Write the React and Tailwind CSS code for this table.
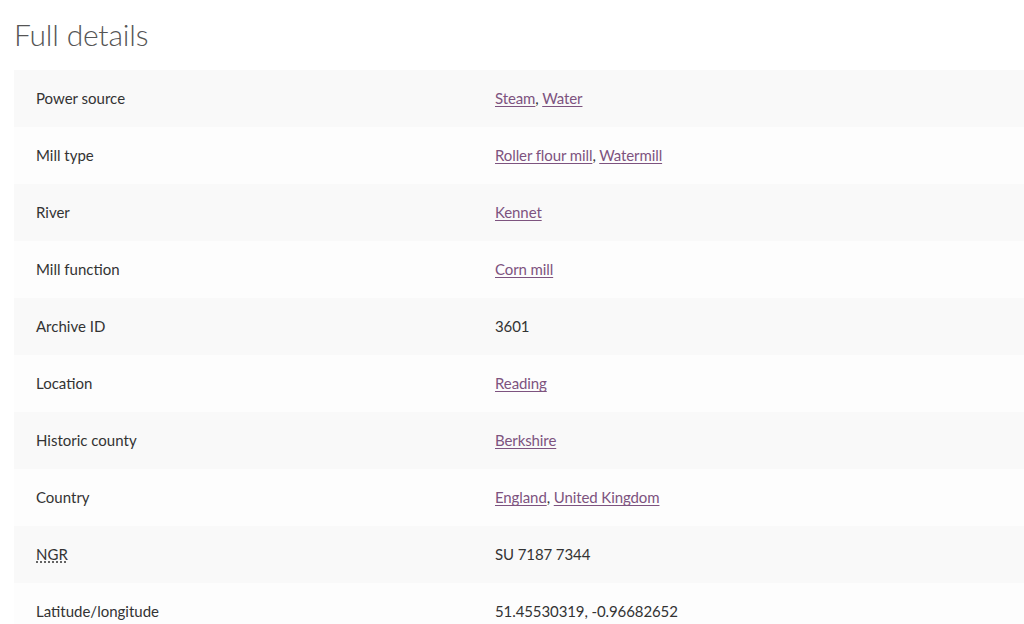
const rows = [
  { label: 'Power source', links: ['Steam', 'Water'] },
  { label: 'Mill type', links: ['Roller flour mill', 'Watermill'] },
  { label: 'River', links: ['Kennet'] },
  { label: 'Mill function', links: ['Corn mill'] },
  { label: 'Archive ID', text: '3601' },
  { label: 'Location', links: ['Reading'] },
  { label: 'Historic county', links: ['Berkshire'] },
  { label: 'Country', links: ['England', 'United Kingdom'] },
  { label: 'NGR', text: 'SU 7187 7344', abbr: true },
  { label: 'Latitude/longitude', text: '51.45530319, -0.96682652' },
]

export default function App() {
  return (
    <div className="min-h-screen bg-white pl-[14px] pt-[14px] text-[#333]" style={{ fontFamily: '"Lato", "Liberation Sans", sans-serif' }}>
      <h2 className="text-[30px] font-light leading-[40px] text-[#555] tracking-[-0.2px]">Full details</h2>
      <div className="mt-[16px]">
        {rows.map((r, i) => (
          <div
            key={r.label}
            className={`grid h-[57px] grid-cols-[459px_1fr] items-center text-[15px] ${i % 2 === 0 ? 'bg-[#f9f9f9]' : 'bg-[#fdfdfd]'}`}
          >
            <div className="pl-[22px]">
              {r.abbr ? (
                <abbr className="underline decoration-dotted" title="National Grid Reference">{r.label}</abbr>
              ) : (
                r.label
              )}
            </div>
            <div className="pl-[22px] tracking-[-0.1px]">
              {r.links
                ? r.links.map((l, j) => (
                    <span key={l}>
                      <a href="#" className="text-[#7d537f] underline underline-offset-2">{l}</a>
                      {j < r.links.length - 1 && ', '}
                    </span>
                  ))
                : r.text}
            </div>
          </div>
        ))}
      </div>
    </div>
  )
}
